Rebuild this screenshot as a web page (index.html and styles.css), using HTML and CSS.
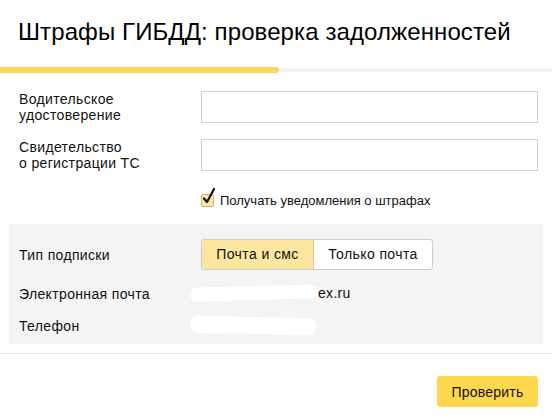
FILE: index.html
```html
<!DOCTYPE html>
<html lang="ru">
<head>
<meta charset="utf-8">
<link rel="stylesheet" href="styles.css">
</head>
<body>
<div class="page">
  <h1 class="title">Штрафы ГИБДД: проверка задолженностей</h1>
  <div class="progress"><div class="progress-fill"></div></div>
  <div class="form">
    <div class="row">
      <div class="label">Водительское<br>удостоверение</div>
      <div class="input"></div>
    </div>
    <div class="row">
      <div class="label">Свидетельство<br>о регистрации ТС</div>
      <div class="input"></div>
    </div>
    <div class="row check-row">
      <div></div>
      <label class="check">
        <span class="box"><svg width="16" height="19" viewBox="0 0 16 19"><path d="M3 11.5 L6 15 L13 2" fill="none" stroke="#111" stroke-width="2.2" stroke-linecap="round" stroke-linejoin="round"/></svg></span>
        <span>Получать уведомления о штрафах</span>
      </label>
    </div>
  </div>
  <div class="panel">
    <div class="prow sub">
      <div class="label">Тип подписки</div>
      <div class="seg">
        <span class="seg-btn active">Почта и смс</span>
        <span class="seg-btn second">Только почта</span>
      </div>
    </div>
    <div class="prow">
      <div class="label">Электронная почта</div>
      <div class="value"><span class="blot blot-mail"></span><span class="mail">ex.ru</span></div>
    </div>
    <div class="prow">
      <div class="label">Телефон</div>
      <div class="value"><span class="blot blot-phone"></span></div>
    </div>
  </div>
  <div class="footer">
    <button class="submit">Проверить</button>
  </div>
</div>
</body>
</html>
```
FILE: styles.css
```css
html, body {
  margin: 0;
  padding: 0;
  background: #fff;
}
body {
  font-family: "Liberation Sans", Arial, sans-serif;
  color: #111;
  font-size: 14px;
}
.page {
  width: 552px;
  height: 417px;
  overflow: hidden;
}
.title {
  margin: 0;
  padding: 17px 0 0 18px;
  height: 50px;
  box-sizing: border-box;
  font-weight: normal;
  font-size: 24px;
  line-height: 30px;
  color: #000;
  white-space: nowrap;
  letter-spacing: 0.1px;
}
.progress {
  margin-top: 18px;
  height: 4px;
  background: #f2f2f2;
  position: relative;
}
.progress-fill {
  position: absolute;
  left: 0;
  top: -1px;
  width: 279px;
  height: 6px;
  background: #fcd659;
  border-radius: 0 3px 3px 0;
}
.form {
  padding: 19px 14px 0 19px;
  display: flex;
  flex-direction: column;
  gap: 16px;
}
.row {
  display: grid;
  grid-template-columns: 182px 337px;
  align-items: center;
}
.label {
  line-height: 16px;
  font-size: 14px;
  letter-spacing: 0.35px;
  color: #111;
}
.input {
  height: 32px;
  box-sizing: border-box;
  border: 1px solid #cfcfcf;
  background: #fff;
}
.check-row {
  margin-top: 6px;
}
.check {
  display: flex;
  align-items: center;
  gap: 6px;
  font-size: 13px;
}
.box {
  width: 13px;
  height: 13px;
  box-sizing: border-box;
  border: 1px solid #c9b57a;
  border-radius: 2px;
  background: #fde7a0;
  position: relative;
}
.box svg {
  position: absolute;
  left: -1px;
  top: -8px;
}
.panel {
  margin: 16px 9px 0 9px;
  background: #f4f4f4;
  padding: 15px 0 0 10px;
  height: 120px;
  box-sizing: border-box;
}
.prow {
  display: grid;
  grid-template-columns: 182px auto;
  align-items: center;
  height: 32px;
}
.prow.sub {
  height: 31px;
  margin-bottom: 8px;
}
.seg {
  display: flex;
  width: max-content;
  border: 1px solid #cdcdcd;
  border-radius: 3px;
  overflow: hidden;
  background: #fff;
}
.seg-btn {
  height: 29px;
  line-height: 29px;
  box-sizing: border-box;
  text-align: center;
  font-size: 14px;
  letter-spacing: 0.4px;
  color: #111;
}
.seg-btn.active {
  width: 112px;
  background: #fde7a0;
  border-right: 1px solid #d9c48c;
}
.seg-btn.second {
  width: 118px;
}
.value {
  position: relative;
  height: 20px;
}
.mail {
  position: absolute;
  left: 117px;
  top: 1px;
  font-size: 14px;
  letter-spacing: 0.3px;
}
.blot {
  position: absolute;
  background: #fff;
  border-radius: 10px;
}
.blot-mail {
  left: -11px;
  top: 2px;
  width: 128px;
  height: 14px;
  transform: rotate(-1.5deg);
}
.blot-phone {
  left: -11px;
  top: 1px;
  width: 126px;
  height: 17px;
  transform: rotate(1deg);
}
.footer {
  margin-top: 9px;
  border-top: 1px solid #e6e6e6;
  display: flex;
  justify-content: flex-end;
  padding: 22px 14px 0 0;
}
.submit {
  width: 101px;
  height: 31px;
  border: none;
  border-radius: 3px;
  background: #fdd84f;
  font-family: "Liberation Sans", Arial, sans-serif;
  font-size: 14px;
  letter-spacing: 0.2px;
  color: #111;
  padding: 0;
}
```
